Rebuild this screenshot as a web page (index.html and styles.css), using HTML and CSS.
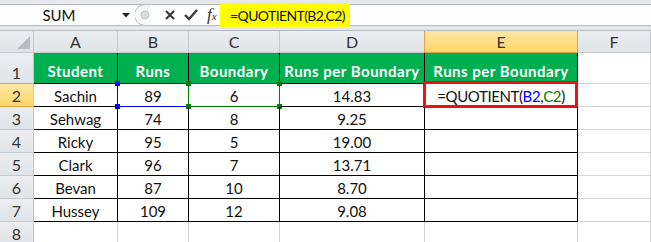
FILE: index.html
```html
<!DOCTYPE html>
<html lang="en">
<head>
    <meta charset="UTF-8">
    <meta name="viewport" content="width=device-width, initial-scale=1.0">
    <title>QUOTIENT</title>
    <link rel="stylesheet" href="styles.css">
</head>
<body>
    <div class="formula-bar">
        <div class="name-box">
            <span class="name">SUM</span>
            <svg class="caret" width="8" height="5" viewBox="0 0 8 5"><path d="M0 0 H8 L4 4.5 Z" fill="#222"/></svg>
        </div>
        <div class="fx-tools">
            <svg class="grip" width="16" height="22" viewBox="0 0 16 22">
                <path d="M16 0.5 H10 A10 10 0 0 0 10 21.5 H16" fill="#f7f7f7" stroke="#b9bcc0"/>
                <circle cx="10" cy="11" r="4" fill="#d9dbde" stroke="#c4c6c9"/>
            </svg>
            <svg class="tool" width="14" height="14" viewBox="0 0 14 14"><path d="M3 3 L11 11 M11 3 L3 11" stroke="#3a3a3a" stroke-width="2.2"/></svg>
            <svg class="tool" width="16" height="14" viewBox="0 0 16 14"><path d="M2 7 L6 11 L14 2" stroke="#3a3a3a" stroke-width="2.4" fill="none"/></svg>
            <span class="fx">f<small>x</small></span>
        </div>
        <div class="formula">
            <span class="formula-text">=QUOTIENT(B2,C2)</span>
        </div>
        <div class="formula-rest"></div>
    </div>

    <div class="sheet">
        <div class="corner"><span class="corner-tri"></span></div>
        <div class="col-hdr">A</div>
        <div class="col-hdr">B</div>
        <div class="col-hdr">C</div>
        <div class="col-hdr">D</div>
        <div class="col-hdr active">E</div>
        <div class="col-hdr">F</div>

        <div class="row-hdr tall">1</div>
        <div class="cell head">Student</div>
        <div class="cell head">Runs</div>
        <div class="cell head">Boundary</div>
        <div class="cell head">Runs per Boundary</div>
        <div class="cell head">Runs per Boundary</div>
        <div class="cell empty"></div>

        <div class="row-hdr active">2</div>
        <div class="cell">Sachin</div>
        <div class="cell ref">89<span class="ref-box blue"><i></i><i></i><i></i><i></i></span></div>
        <div class="cell ref">6<span class="ref-box green"><i></i><i></i><i></i><i></i></span></div>
        <div class="cell">14.83</div>
        <div class="cell editing">=QUOTIENT(<span class="b-ref">B2</span>,<span class="c-ref">C2</span>)</div>
        <div class="cell empty"></div>

        <div class="row-hdr">3</div>
        <div class="cell">Sehwag</div>
        <div class="cell">74</div>
        <div class="cell">8</div>
        <div class="cell">9.25</div>
        <div class="cell"></div>
        <div class="cell empty"></div>

        <div class="row-hdr">4</div>
        <div class="cell">Ricky</div>
        <div class="cell">95</div>
        <div class="cell">5</div>
        <div class="cell">19.00</div>
        <div class="cell"></div>
        <div class="cell empty"></div>

        <div class="row-hdr">5</div>
        <div class="cell">Clark</div>
        <div class="cell">96</div>
        <div class="cell">7</div>
        <div class="cell">13.71</div>
        <div class="cell"></div>
        <div class="cell empty"></div>

        <div class="row-hdr">6</div>
        <div class="cell">Bevan</div>
        <div class="cell">87</div>
        <div class="cell">10</div>
        <div class="cell">8.70</div>
        <div class="cell"></div>
        <div class="cell empty"></div>

        <div class="row-hdr">7</div>
        <div class="cell">Hussey</div>
        <div class="cell">109</div>
        <div class="cell">12</div>
        <div class="cell">9.08</div>
        <div class="cell"></div>
        <div class="cell empty"></div>

        <div class="row-hdr">8</div>
        <div class="cell empty"></div>
        <div class="cell empty"></div>
        <div class="cell empty"></div>
        <div class="cell empty"></div>
        <div class="cell empty"></div>
        <div class="cell empty"></div>
    </div>
</body>
</html>
```

FILE: styles.css
```css
* {
    box-sizing: border-box;
}

body {
    margin: 0;
    width: 651px;
    height: 242px;
    overflow: hidden;
    background: #fff;
    font-family: Lato, "Open Sans", sans-serif;
    font-size: 15px;
    color: #111;
}

/* formula bar */

.formula-bar {
    display: flex;
    height: 30px;
    padding: 4px 0 4px;
    background: #e6e8eb;
}

.name-box {
    display: flex;
    align-items: center;
    width: 135px;
    padding: 0 5px 0 0;
    background: #fff;
    border-top: 1px solid #b6b9bd;
    border-bottom: 1px solid #b6b9bd;
}

.name {
    flex: 1;
    text-align: center;
    padding-right: 4px;
}

.fx-tools {
    display: flex;
    align-items: center;
    gap: 6px;
    width: 85px;
    background: #fff;
    border-top: 1px solid #b6b9bd;
    border-bottom: 1px solid #b6b9bd;
}

.grip {
    margin-top: -1px;
    margin-right: 6px;
}

.fx {
    font-family: "Liberation Serif", serif;
    font-style: italic;
    font-size: 17px;
    color: #333;
    margin-left: 2px;
}

.fx small {
    font-size: 11px;
}

.formula {
    display: flex;
    align-items: center;
    margin: -1px 0;
    padding: 0 5px 0 10px;
    background: #ffff00;
    font-size: 14px;
    letter-spacing: -0.6px;
}

.formula-rest {
    flex: 1;
    background: #fff;
    border-top: 1px solid #b6b9bd;
    border-bottom: 1px solid #b6b9bd;
}

/* sheet */

.sheet {
    display: grid;
    grid-template-columns: 34px 84px 71px 91px 145px 153px 1fr;
    grid-template-rows: 22px 31px repeat(7, 23px);
    border-top: 1px solid #b6b9bd;
}

.corner,
.col-hdr,
.row-hdr {
    display: flex;
    align-items: center;
    justify-content: center;
    background: linear-gradient(#eceef1, #e0e3e7);
    border-right: 1px solid #c5c9ce;
    border-bottom: 1px solid #c5c9ce;
    color: #333;
    font-size: 16px;
}

.col-hdr.active {
    background: linear-gradient(#fbe7a6, #ffd666);
    border: 1px solid #e1a345;
    border-top: none;
    margin-left: -1px;
}

.corner {
    position: relative;
}

.corner-tri {
    position: absolute;
    right: 3px;
    bottom: 3px;
    width: 0;
    height: 0;
    border-left: 13px solid transparent;
    border-bottom: 13px solid #b9bdc2;
}

.row-hdr {
    align-items: flex-end;
    padding-bottom: 1px;
}

.row-hdr.active {
    background: linear-gradient(#fbe7a6, #ffd666);
    border-bottom-color: #e1a345;
    margin-top: -1px;
    border-top: 1px solid #e1a345;
}

.cell {
    position: relative;
    display: flex;
    align-items: flex-end;
    justify-content: center;
    padding-bottom: 1px;
    border-right: 1px solid #000;
    border-bottom: 1px solid #000;
    white-space: nowrap;
}

.cell.empty {
    border-right-color: #d4d4d4;
    border-bottom-color: #d4d4d4;
}

.cell.head {
    background: #00b050;
    color: #fff;
    font-weight: bold;
    letter-spacing: 0.5px;
    padding-bottom: 3px;
}

.cell.editing {
    letter-spacing: -0.4px;
}

.ref-box {
    position: absolute;
    inset: -1px -1px -1px -1px;
    border: 1px solid;
}

.ref-box.blue {
    color: #0000ff;
    border-color: #0000ff;
}

.ref-box.green {
    color: #008000;
    border-color: #008000;
    left: -1px;
}

.ref-box i {
    position: absolute;
    width: 5px;
    height: 5px;
    background: currentColor;
}

.ref-box i:nth-child(1) { left: -3px; top: -3px; }
.ref-box i:nth-child(2) { right: -3px; top: -3px; }
.ref-box i:nth-child(3) { left: -3px; bottom: -3px; }
.ref-box i:nth-child(4) { right: -3px; bottom: -3px; }

.editing::after {
    content: "";
    position: absolute;
    top: -3px;
    bottom: -2px;
    left: -2px;
    right: -1px;
    border: 3px solid #ee1111;
}

.b-ref {
    color: #0000ff;
}

.c-ref {
    color: #008000;
}
```
